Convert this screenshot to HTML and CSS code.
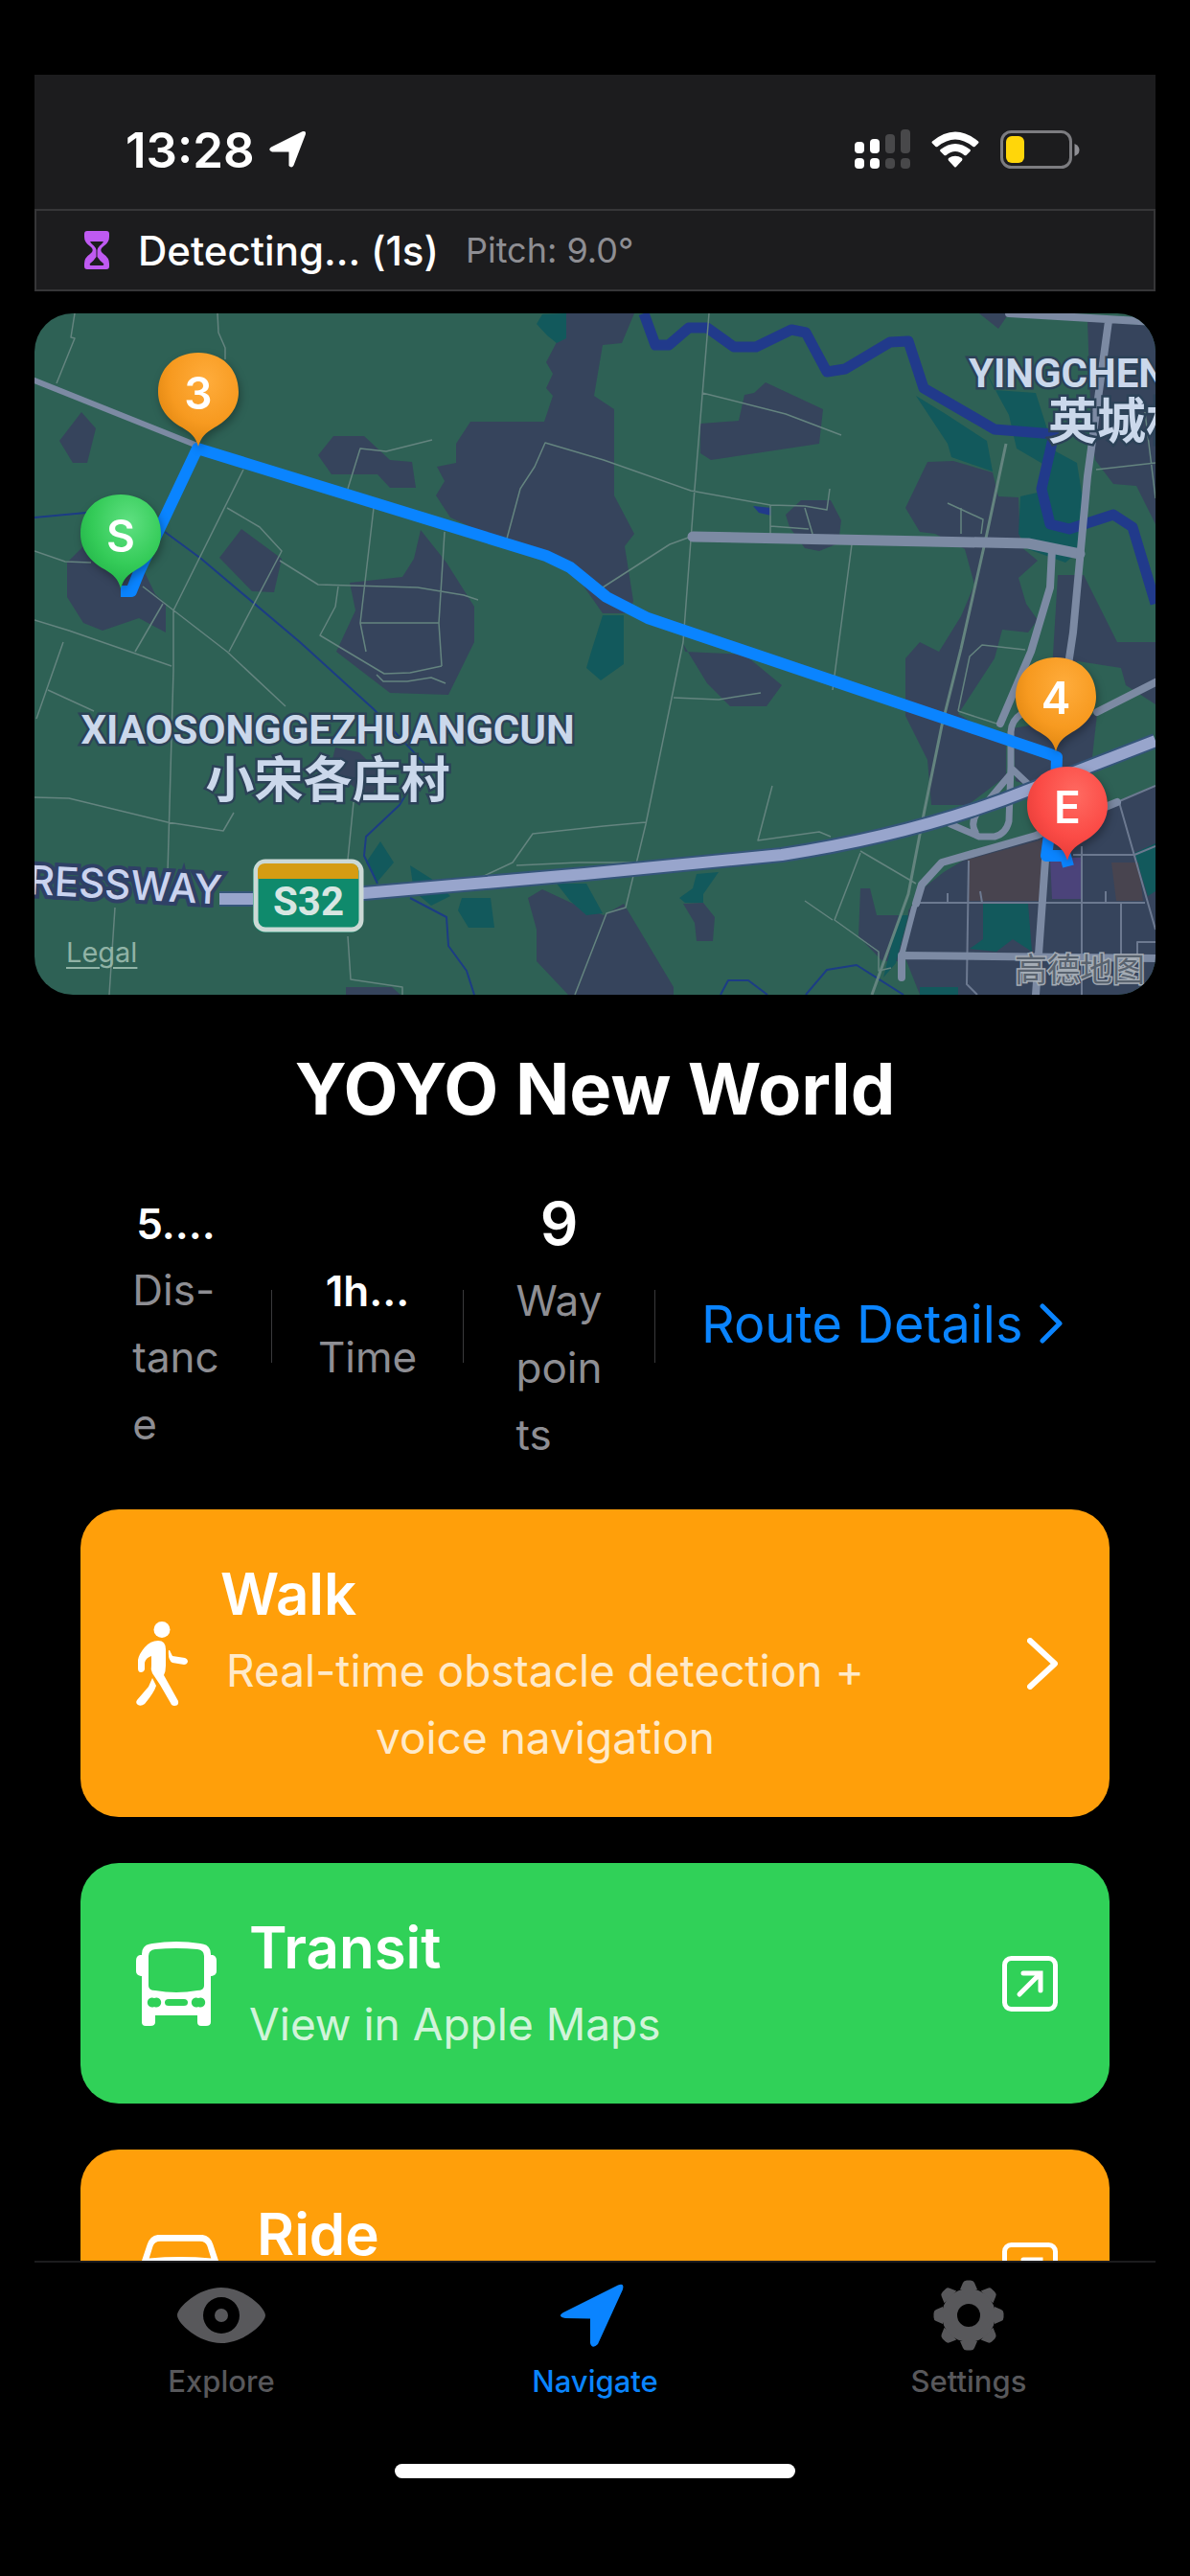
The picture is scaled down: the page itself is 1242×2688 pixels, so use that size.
FILE: index.html
```html
<!DOCTYPE html>
<html lang="en">
<head>
    <meta charset="UTF-8">
    <meta name="viewport" content="width=device-width, initial-scale=1">
    <title>YOYO New World</title>
    <link rel="stylesheet" href="styles.css">
</head>
<body>
    <div class="phone">
        <div class="status-bar">
            <div class="status-left">
                <span class="clock">13:28</span>
                <svg class="location-icon" viewBox="0 0 40 40"><path d="M3 17.500 35.500 1.200Q40 0 38.800 4.500L26.500 36.500Q24.500 40 21.500 37V22.500L4 22.500Q-1 20.500 3 17.500Z"/></svg>
            </div>
            <div class="status-right">
                <svg class="signal-icon" viewBox="0 0 58 42">
                    <g fill="#fff"><rect x="0" y="13" width="10" height="12" rx="4"/><rect x="16" y="10" width="10" height="15" rx="4"/><rect x="0" y="30" width="10" height="11" rx="4"/><rect x="16" y="30" width="10" height="11" rx="4"/></g>
                    <g fill="#48484a"><rect x="32" y="5" width="10" height="20" rx="4"/><rect x="48" y="0" width="10" height="25" rx="4"/><rect x="32" y="30" width="10" height="11" rx="4"/><rect x="48" y="30" width="10" height="11" rx="4"/></g>
                </svg>
                <svg class="wifi-icon" viewBox="0 0 50 38">
                    <path d="M1 10.500Q25-9.500 49 10.500Q50 11.500 49 12.500L45.500 16Q44.500 16.500 43.500 16Q25 1 6.500 16Q5.500 16.500 4.500 16L1 12.500Q0 11.500 1 10.500Z"/>
                    <path d="M9.500 19Q25 7 40.500 19Q41.500 20 40.500 21L36.500 25Q35.500 25.500 34.500 25Q25 17 15.500 25Q14.500 25.500 13.500 25L9.500 21Q8.500 20 9.500 19Z"/>
                    <path d="M18 28Q25 23.500 32 28Q33 29 32 30.500L26 37Q25 38 24 37L18 30.500Q17 29 18 28Z"/>
                </svg>
                <svg class="battery-icon" viewBox="0 0 83 40">
                    <rect x="1.500" y="1.500" width="72" height="37" rx="10" fill="none" stroke="#7c7c80" stroke-width="3"/>
                    <path d="M77.500 14Q82.500 16 82.500 20.500T77.500 27Z" fill="#8e8e93"/>
                    <rect x="6" y="6" width="19" height="28" rx="6" fill="#ffd60a"/>
                </svg>
            </div>
        </div>

        <div class="detect-bar">
            <svg class="hourglass-icon" viewBox="0 0 26 40">
                <path d="M3 0H23Q26 0 26 3V6Q26 12 20 16Q14.500 20 20 24Q26 28 26 34V37Q26 40 23 40H3Q0 40 0 37V34Q0 28 6 24Q11.500 20 6 16Q0 12 0 6V3Q0 0 3 0ZM6 11Q7 13 10 15.500Q12 17.500 12.500 20V27Q10 31 6 34Q5 36 7 36H19Q21 36 20 34Q16 31 13.500 27V20Q14 17.500 16 15.500Q19 13 20 11Z" fill-rule="evenodd"/>
            </svg>
            <span class="detect-text">Detecting... (1s)</span>
            <span class="pitch">Pitch: 9.0°</span>
        </div>

        <main class="content">
            <div class="map">
                <svg class="map-canvas" viewBox="36 327 1170 711">
                    <defs>
                        <radialGradient id="pinOrange" cx=".6" cy=".3" r=".75"><stop offset="0" stop-color="#ffac3b"/><stop offset=".6" stop-color="#f79a20"/><stop offset="1" stop-color="#dd830e"/></radialGradient>
                        <radialGradient id="pinGreen" cx=".6" cy=".3" r=".75"><stop offset="0" stop-color="#5fe081"/><stop offset=".6" stop-color="#34cb58"/><stop offset="1" stop-color="#20b046"/></radialGradient>
                        <radialGradient id="pinRed" cx=".6" cy=".3" r=".75"><stop offset="0" stop-color="#ff6a61"/><stop offset=".6" stop-color="#fb4b46"/><stop offset="1" stop-color="#e23a36"/></radialGradient>
                        <path id="pin" d="M0 0C-3-10-7-14-17-20C-32-28-42-41-42-57C-42-82-24-98 0-98S42-82 42-57C42-41 32-28 17-20C7-14 3-10 0 0Z"/>
                    </defs>
                    <rect class="land" x="36" y="327" width="1170" height="711"/>
                    <!-- built-up areas -->
                    <g class="town">
                        <path d="M591 327H662L649 358 629 360 620 413 641 427V517L662 557 652 570 661 627 657 640H629L601 600 470 540 455 517 464 502 456 487 476 483V463L491 440H568L577 413 570 405 577 390 570 378 581 357 591 353Z"/>
                        <path d="M62 460 85 430 100 447 91 483H76Z"/>
                        <path d="M332 475 348 455H380L407 480 430 482 434 509H407L394 495H346Z"/>
                        <path d="M70 587 87 570 149 593 162 620 173 630V660L145 645 107 658 87 650 70 623Z"/>
                        <path d="M229 582 252 552 294 583 286 618 263 617Z"/>
                        <path d="M439 553 466 587 495 633V670L468 725 407 723 351 680 371 637 365 608 420 602 432 583Z"/>
                        <path d="M777 412 787 410 799 399 859 427 855 463 742 480 731 473V442L771 439Z"/>
                        <path d="M820 537 836 522H867L878 543 875 567 855 575 840 572 824 550Z"/>
                        <path d="M945 530 968 482 995 481 1036 493 1042 518 1063 519 1065 570 1083 585 1063 603 1071 630 1083 647 1073 660 1046 657 1038 687 1010 730 1000 745 1050 775V810L1010 840H972L968 793 945 747V687L960 670 980 680 1003 643 1017 610 1007 573 976 557 960 555Z"/>
                        <path d="M1022 327 1042 343 1053 327ZM1135 335 1206 340V547L1186 507 1162 505 1143 480 1139 450Z"/>
                        <path d="M1104 600H1131L1166 670H1206V735L1175 715 1170 697 1125 690 1098 700Z"/>
                        <path d="M1057 760 1145 745 1140 790 1104 830 1060 815Z"/>
                        <path d="M713 672 715 680 777 683 816 715 800 737H762L738 713ZM713 943 734 942 746 957 744 982H727L725 963Z"/>
                        <path d="M551 937 566 928 596 942 630 955 651 943 703 1030V1038H593L560 1003V970ZM361 1030H409L418 1038H361Z"/>
                        <path d="M898 927H908L915 955H948L937 1003H921L896 977ZM350 780 375 785 400 810 385 835 345 800Z"/>
                        <path d="M966 925 985 910 1010 895 1090 870 1206 820V1038H960L945 1000 948 950Z"/>
                    </g>
                    <!-- parks -->
                    <g class="park">
                        <path d="M560 338 566 328 591 327V353L581 358 571 350ZM617 680 629 642H651V693L627 710 612 697Z"/>
                        <path d="M956 413 987 432 1030 460 1036 492 993 477 989 463ZM1022 373 1038 407 1081 410 1100 470 1124 483 1131 527 1124 577 1112 587 1073 573 1063 557 1065 518 1087 513 1090 485 1061 468 1053 433 1042 413Z"/>
                        <path d="M709 937 723 927 727 912 750 910 734 933V942H715ZM581 922H612L629 953 612 955 595 940Z"/>
                        <path d="M482 937H512L516 968H489L478 950ZM397 878 411 900 394 920 382 900ZM428 903 455 920 470 935 450 945 432 930Z"/>
                        <path d="M1026 943H1073L1077 993 1057 980 1040 993 1012 990 1026 980ZM1184 890 1206 880V930L1198 935ZM938 955H948L935 1005 922 1020ZM960 1030H1000V1038H960Z"/>
                    </g>
                    <path fill="#48444f" d="M1010 897 1092 875V940H1010ZM1160 900H1188L1193 940H1165Z"/>
                    <path fill="#4b437a" d="M1096 895H1130V938H1098Z"/>
                    <!-- water -->
                    <path class="river" d="M672 327 684 360H698L719 342H738L766 362H789L826 344 841 347 863 388 882 385 929 357 948 356 964 405 1038 448 1100 453 1087 510 1096 547 1116 552 1162 537 1182 550 1206 630"/>
                    <path class="stream" d="M36 540 90 535M172 555 210 583 313 670 390 740 443 797 417 840 382 873 380 893 394 922M428 937 466 957 468 987 487 1013 495 1038M752 1038 760 1023H781L801 1038M841 1038 863 1012 894 1007 943 1038"/>
                    <path fill="#213a8b" d="M786 528 805 530V538L792 535Z"/>
                    <!-- lanes -->
                    <path class="lane" d="M78 327 74 352 78 353 59 400M227 327 228 347 235 363V375M254 490 181 637V700L175 910M237 530 271 550 294 575 239 680M292 585 332 610 436 613 484 621 499 626M353 612 350 633 334 663 401 703 428 702 461 695M390 530 376 650 382 680M464 555 458 650 461 695M376 650H458M393 704 400 711 425 711 450 707 465 713M363 510 376 468 403 471 451 459M529 562 543 510 558 487 569 462 630 480 721 512 804 527 840 528 863 532 866 510M804 527V557M840 530 848 557M804 549 844 552M740 327 725 510 713 670 674 860 653 947 633 953 600 1038M733 410 820 432 878 454M721 560 699 568 629 613M889 568 869 720M989 525 1026 542 1024 557M1003 530V557M36 575 68 586 95 587M149 612 237 680 298 737M36 647 72 658 179 695M170 630 141 680M66 670 38 750M50 720 98 742M36 832 72 833 175 858 233 867 244 848M120 947 114 1038M369 837 363 897M363 977 366 1022 420 1030V1038M503 915 535 900 556 870 630 862 674 858M539 903 604 900 665 900M806 820 791 877 855 868 867 873M898 888 956 922M898 890 871 960 917 993V1013L930 1010M840 940 869 960M703 728 750 730 794 723M1144 490 1206 483M1195 430 1206 520M1000 742 1012 685 1025 673 1070 678M1000 742 1040 755"/>
                    <path class="lane rail" d="M1050 463 1030 557 1003 677 983 757 964 850 948 933 910 1038"/>
                    <path class="lane city" d="M1011 898 1009 1027 1020 1038M960 942H1195M1129 883V1038M1170 942V1000M1168 837 1206 970M1120 892H1184L1206 883M989 932V942M1023 930 1025 942M1154 930V942M1166 837 1206 820M1187 998V983H1206"/>
                    <!-- roads -->
                    <g class="road">
                        <path d="M36 397 206 465M954 947 941 997" stroke-width="6"/>
                        <path d="M723 560 1073 567 1127 578" stroke-width="11"/>
                        <path d="M1157 335 1135 497 1120 660 1114 700M1053 327 1206 336M1098 573 1096 613 1076 680 1044 755M1206 712 1145 743" stroke-width="8"/>
                        <path d="M1066 745Q1055 752 1055 765V800L1053 857Q1050 870 1038 873H1022L992 860M1057 805 1030 837Q1010 855 1018 868M1057 803 1075 820" stroke-width="7"/>
                        <path d="M956 943 962 923 983 900 1081 872 1166 837M1092 883 1081 1038M941 1020V997L1206 1000" stroke-width="8"/>
                    </g>
                    <path class="expressway-edge" d="M229 938H263L380 932 610 912 816 892Q960 870 1077 823L1206 773"/>
                    <path class="expressway" d="M229 938H263L380 932 610 912 816 892Q960 870 1077 823L1206 773"/>
                    <!-- planned route -->
                    <path class="route" d="M126 617H137L145 597 206 468 570 580 595 592 633 623 676 645 1096 787 1103 790 1102 820 1092 893H1112L1115 904"/>

                    <g class="place">
                        <text x="342" y="776" text-anchor="middle">XIAOSONGGEZHUANGCUN</text>
                        <text class="cjk" x="342" y="832" text-anchor="middle">小宋各庄村</text>
                        <text x="1011" y="404">YINGCHENGCUN</text>
                        <text class="cjk" x="1094" y="458">英城村</text>
                    </g>
                    <text class="road-name" x="29" y="933" transform="rotate(3 29 933)">RESSWAY</text>

                    <rect x="264" y="897" width="115" height="76" rx="13" fill="#0f8a6c"/>
                    <rect x="267" y="899" width="110" height="71" rx="10" fill="#0f8a6c" stroke="#ccd9d5" stroke-width="5"/>
                    <path d="M269 917V909Q269 901 277 901H366Q374 901 374 909V917Z" fill="#d59c12"/>
                    <text class="shield" x="322" y="955" text-anchor="middle">S32</text>

                    <g class="pin">
                        <use href="#pin" x="207" y="466" fill="url(#pinOrange)"/><text x="207" y="427">3</text>
                        <use href="#pin" x="126" y="614" fill="url(#pinGreen)"/><text x="126" y="576">S</text>
                        <use href="#pin" x="1102" y="784" fill="url(#pinOrange)"/><text x="1102" y="745">4</text>
                        <use href="#pin" x="1114" y="898" fill="url(#pinRed)"/><text x="1114" y="859">E</text>
                    </g>
                    <text class="map-brand" x="1059" y="1024">高德地图</text>
                </svg>
                <a class="legal" href="#">Legal</a>
            </div>

            <h1>YOYO New World</h1>

            <div class="stats">
                <div class="stat">
                    <span class="value">5....</span>
                    <span class="label">Dis-<br>tanc<br>e</span>
                </div>
                <div class="divider"></div>
                <div class="stat">
                    <span class="value">1h...</span>
                    <span class="label">Time</span>
                </div>
                <div class="divider"></div>
                <div class="stat">
                    <span class="value big">9</span>
                    <span class="label">Way<br>poin<br>ts</span>
                </div>
                <div class="divider"></div>
                <a class="details" href="#">Route Details
                    <svg class="details-chevron" viewBox="0 0 24 42"><path d="M3 3 21 21 3 39"/></svg>
                </a>
            </div>

            <div class="modes">
                <button class="mode walk">
                    <svg class="walk-icon" viewBox="0 0 54 88">
                        <ellipse cx="27" cy="8.500" rx="8.500" ry="8.500"/>
                        <path d="M23 20Q31 20 31 29V46Q31 52 29 56L34 65 44 83Q45 88 40 88Q37 88 36 85L25 66 17 54Q15 50 16 46V36Q10 38 9 43V50Q8 53 5 53Q2 53 2 49V40Q3 34 9 27Q15 20 23 20Z"/>
                        <path d="M17 59 21 67Q19 74 9 86Q5 89 2 87Q-1 85 1 82L13 68ZM35 30 38 36 51 38Q54 39 54 42Q53 45 50 45L38 43Q33 40 34 30Z"/>
                    </svg>
                    <span class="mode-text">
                        <span class="mode-title">Walk</span>
                        <span class="mode-sub">Real-time obstacle detection +<br>voice navigation</span>
                    </span>
                    <svg class="mode-chevron" viewBox="0 0 32 54"><path d="M3 3 29 27 3 51"/></svg>
                </button>
                <button class="mode transit">
                    <svg class="bus-icon" viewBox="0 0 84 88">
                        <path fill-rule="evenodd" d="M17 2Q42-2 67 2Q78 3 78 13V14H80Q84 15 84 20V31Q84 35 79 36H78V84Q78 88 73 88H68Q64 88 64 84V77H20V84Q20 88 15 88H10Q6 88 6 84V36H5Q0 35 0 31V20Q0 15 4 14H6V13Q6 3 17 2ZM20 8Q13 9 13 15V46Q13 51 20 51Q42 55 64 51Q71 51 71 46V15Q71 9 64 8Q42 6 20 8ZM19 59A5 5 0 1 0 19 68A5 5 0 1 0 19 59ZM65 59A5 5 0 1 0 65 68A5 5 0 1 0 65 59ZM34 60Q30 60 30 63.500T34 67H50Q54 67 54 63.500T50 60Z"/>
                    </svg>
                    <span class="mode-text">
                        <span class="mode-title">Transit</span>
                        <span class="mode-sub">View in Apple Maps</span>
                    </span>
                    <svg class="external-icon" viewBox="0 0 58 58"><rect x="2.500" y="2.500" width="53" height="53" rx="7"/><path d="M18 40 39 19M22 18H40V36"/></svg>
                </button>
                <button class="mode ride">
                    <svg class="car-icon" viewBox="0 0 94 74">
                        <path fill-rule="evenodd" d="M23 0H71Q79 1 82 10L88 28Q94 34 94 42V70Q94 74 89 74H83Q79 74 79 70V64H15V70Q15 74 11 74H5Q0 74 0 70V42Q0 34 6 28L12 10Q15 1 23 0ZM26 7Q20 7 18 12L14 25Q47 22 80 25L76 12Q74 7 68 7ZM18 38A6 6 0 1 0 18 50A6 6 0 1 0 18 38ZM76 38A6 6 0 1 0 76 50A6 6 0 1 0 76 38Z"/>
                    </svg>
                    <span class="mode-text">
                        <span class="mode-title">Ride</span>
                        <span class="mode-sub">View in Apple Maps</span>
                    </span>
                    <svg class="external-icon" viewBox="0 0 58 58"><rect x="2.500" y="2.500" width="53" height="53" rx="7"/><path d="M18 40 39 19M22 18H40V36"/></svg>
                </button>
            </div>
        </main>

        <nav class="tab-bar">
            <div class="tabs">
                <a class="tab" href="#">
                    <svg viewBox="0 0 92 74"><path fill-rule="evenodd" d="M46 8C70 8 92 29 92 37S70 66 46 66 0 45 0 37 22 8 46 8ZM46 18A19 19 0 1 0 46 56A19 19 0 1 0 46 18Z"/><circle cx="46" cy="37" r="7"/></svg>
                    Explore
                </a>
                <a class="tab active" href="#">
                    <svg viewBox="0 0 92 74"><path d="M13 34 70 5.500Q77 3 75 10L49 67Q43 73 41 66L41 40.500 15 40Q6 38 13 34Z"/></svg>
                    Navigate
                </a>
                <a class="tab" href="#">
                    <svg viewBox="-46 -37 92 74">
                        <defs><path id="tooth" d="M-9-27-6-34Q-5-36.500-2-36.500H2Q5-36.500 6-34L9-27Z"/></defs>
                        <path fill-rule="evenodd" d="M0-28A28 28 0 1 0 0 28A28 28 0 1 0 0-28ZM0-12A12 12 0 1 1 0 12A12 12 0 1 1 0-12Z"/>
                        <use href="#tooth"/><use href="#tooth" transform="rotate(45)"/><use href="#tooth" transform="rotate(90)"/><use href="#tooth" transform="rotate(135)"/><use href="#tooth" transform="rotate(180)"/><use href="#tooth" transform="rotate(225)"/><use href="#tooth" transform="rotate(270)"/><use href="#tooth" transform="rotate(315)"/>
                    </svg>
                    Settings
                </a>
            </div>
            <div class="home-indicator"></div>
        </nav>
    </div>
</body>
</html>
```
FILE: styles.css
```css
* {
    box-sizing: border-box;
}

body {
    margin: 0;
    background-color: #000;
    color: #fff;
    font-family: Inter, "Noto Sans CJK SC", sans-serif;
}

a {
    text-decoration: none;
}

.phone {
    display: flex;
    flex-direction: column;
    height: 100vh;
    padding: 78px 36px;
}

/* status bar */
.status-bar {
    display: flex;
    justify-content: space-between;
    align-items: center;
    height: 140px;
    flex-shrink: 0;
    padding: 16px 79px 0 95px;
    background-color: #1c1c1e;
}

.status-left,
.status-right {
    display: flex;
    align-items: center;
}

.status-left {
    gap: 14px;
}

.status-right {
    gap: 22px;
}

.clock {
    font-size: 51px;
    font-weight: 600;
}

.location-icon {
    width: 40px;
    fill: #fff;
}

.signal-icon {
    width: 58px;
}

.wifi-icon {
    width: 50px;
    fill: #fff;
}

.battery-icon {
    width: 83px;
}

.detect-bar {
    display: flex;
    align-items: center;
    height: 86px;
    flex-shrink: 0;
    padding: 0 50px;
    background-color: #1c1c1e;
    border: 2px solid #363638;
}

.hourglass-icon {
    width: 26px;
    margin-right: 30px;
    fill: #bf5af2;
}

.detect-text {
    margin-right: 28px;
    font-size: 42px;
    font-weight: 500;
}

.pitch {
    font-size: 36px;
    color: #8e8e93;
}

/* scrolling content */
.content {
    flex: 1;
    min-height: 0;
    overflow: hidden;
    padding-top: 23px;
}

.map {
    position: relative;
    border-radius: 40px;
    overflow: hidden;
}

.map-canvas {
    display: block;
    width: 100%;
}

.land {
    fill: #2e6155;
}

.town {
    fill: #36445c;
}

.park {
    fill: #12595c;
}

.river,
.stream,
.lane,
.road,
.expressway,
.expressway-edge,
.route {
    fill: none;
    stroke-linejoin: round;
}

.river {
    stroke: #213a8b;
    stroke-width: 11;
}

.stream {
    stroke: #1c3c85;
    stroke-width: 2;
}

.lane {
    stroke: #64847f;
    stroke-width: 1.5;
}

.rail {
    stroke-width: 3;
}

.city {
    stroke: #6c7990;
    stroke-width: 2;
}

.road {
    stroke: #7c8aa3;
    stroke-linecap: round;
}

.expressway-edge {
    stroke: #35557a;
    stroke-width: 16;
}

.expressway {
    stroke: #98a5cc;
    stroke-width: 12;
}

.route {
    stroke: #0a84ff;
    stroke-width: 12;
}

.place {
    fill: #cbd8eb;
    stroke: #2c4258;
    stroke-width: 5;
    paint-order: stroke;
    font-family: Roboto, sans-serif;
    font-size: 42px;
    font-weight: 700;
}

.place .cjk {
    font-family: "Noto Sans CJK SC", sans-serif;
    font-size: 51px;
}

.road-name {
    fill: #cbd3ef;
    stroke: #2f4066;
    stroke-width: 8;
    paint-order: stroke;
    font-size: 42px;
    font-weight: 500;
}

.shield {
    fill: #d8e6e2;
    font-family: Roboto, sans-serif;
    font-size: 42px;
    font-weight: 700;
}

.pin {
    filter: drop-shadow(2px 4px 4px rgba(0, 0, 0, 0.3));
}

.pin text {
    fill: #fff;
    font-size: 46px;
    font-weight: 600;
    text-anchor: middle;
}

.map-brand {
    fill: #59636f;
    stroke: #a4acb5;
    stroke-width: 3;
    paint-order: stroke;
    font-family: "Noto Sans CJK SC", sans-serif;
    font-size: 34px;
}

.legal {
    position: absolute;
    left: 33px;
    bottom: 26px;
    color: #91b3a6;
    font-size: 29px;
    line-height: 36px;
    text-decoration: underline;
    text-underline-offset: 5px;
}

h1 {
    margin: 52px 0 54px;
    font-size: 74px;
    line-height: 92px;
    font-weight: 700;
    text-align: center;
}

.stats {
    display: flex;
    align-items: center;
    gap: 48px;
    padding: 0 96px;
    margin-bottom: 43px;
}

.stat {
    display: flex;
    flex-direction: column;
    align-items: center;
    gap: 4px;
    width: 103px;
}

.value {
    font-size: 44px;
    line-height: 60px;
    font-weight: 600;
}

.value.big {
    font-size: 62px;
    line-height: 82px;
}

.label {
    color: #8e8e93;
    font-size: 44px;
    line-height: 70px;
}

.divider {
    width: 1px;
    height: 76px;
    background-color: #3a3a3c;
}

.details {
    display: flex;
    align-items: center;
    gap: 18px;
    padding-bottom: 6px;
    color: #0a84ff;
    font-size: 54px;
    white-space: nowrap;
}

.details-chevron {
    width: 24px;
    fill: none;
    stroke: #0a84ff;
    stroke-width: 5;
    stroke-linecap: round;
    stroke-linejoin: round;
}

/* travel modes */
.modes {
    display: flex;
    flex-direction: column;
    gap: 48px;
    padding: 0 48px;
}

.mode {
    display: flex;
    align-items: center;
    gap: 34px;
    width: 100%;
    padding: 48px 54px 48px 58px;
    border: none;
    border-radius: 40px;
    color: #fff;
    font-family: inherit;
    text-align: left;
    cursor: pointer;
}

.mode svg {
    flex-shrink: 0;
    fill: #fff;
}

.walk,
.ride {
    background-color: #ff9f0a;
}

.transit {
    background-color: #30d158;
}

.mode-text {
    display: flex;
    flex-direction: column;
    align-items: flex-start;
    gap: 10px;
    margin-right: auto;
    padding-top: 5px;
}

.mode-title {
    font-size: 60px;
    line-height: 70px;
    font-weight: 600;
}

.mode-sub {
    color: rgba(255, 255, 255, 0.8);
    font-size: 46px;
    line-height: 70px;
    text-align: center;
}

.walk .mode-sub {
    padding: 0 6px;
}

.walk-icon {
    width: 54px;
}

.bus-icon {
    width: 84px;
}

.car-icon {
    width: 92px;
}

.mode .mode-chevron {
    width: 32px;
    fill: none;
    stroke: #fff;
    stroke-width: 6;
    stroke-linecap: round;
    stroke-linejoin: round;
}

.mode .external-icon {
    width: 58px;
    fill: none;
    stroke: #fff;
    stroke-width: 5;
    stroke-linecap: round;
}

/* bottom tabs */
.tab-bar {
    flex-shrink: 0;
    height: 251px;
    padding: 18px 0 24px;
    display: flex;
    flex-direction: column;
    justify-content: space-between;
    align-items: center;
    background-color: #000;
    border-top: 2px solid #1c1c1e;
}

.tabs {
    display: flex;
    width: 100%;
}

.tab {
    display: flex;
    flex: 1;
    flex-direction: column;
    align-items: center;
    gap: 14px;
    color: #58585b;
    font-size: 31px;
    line-height: 36px;
    font-weight: 500;
}

.tab svg {
    width: 92px;
    fill: #58585b;
}

.tab.active {
    color: #0a84ff;
}

.tab.active svg {
    fill: #0a84ff;
}

.home-indicator {
    width: 418px;
    max-width: 50%;
    height: 15px;
    border-radius: 8px;
    background-color: #fff;
}
```
